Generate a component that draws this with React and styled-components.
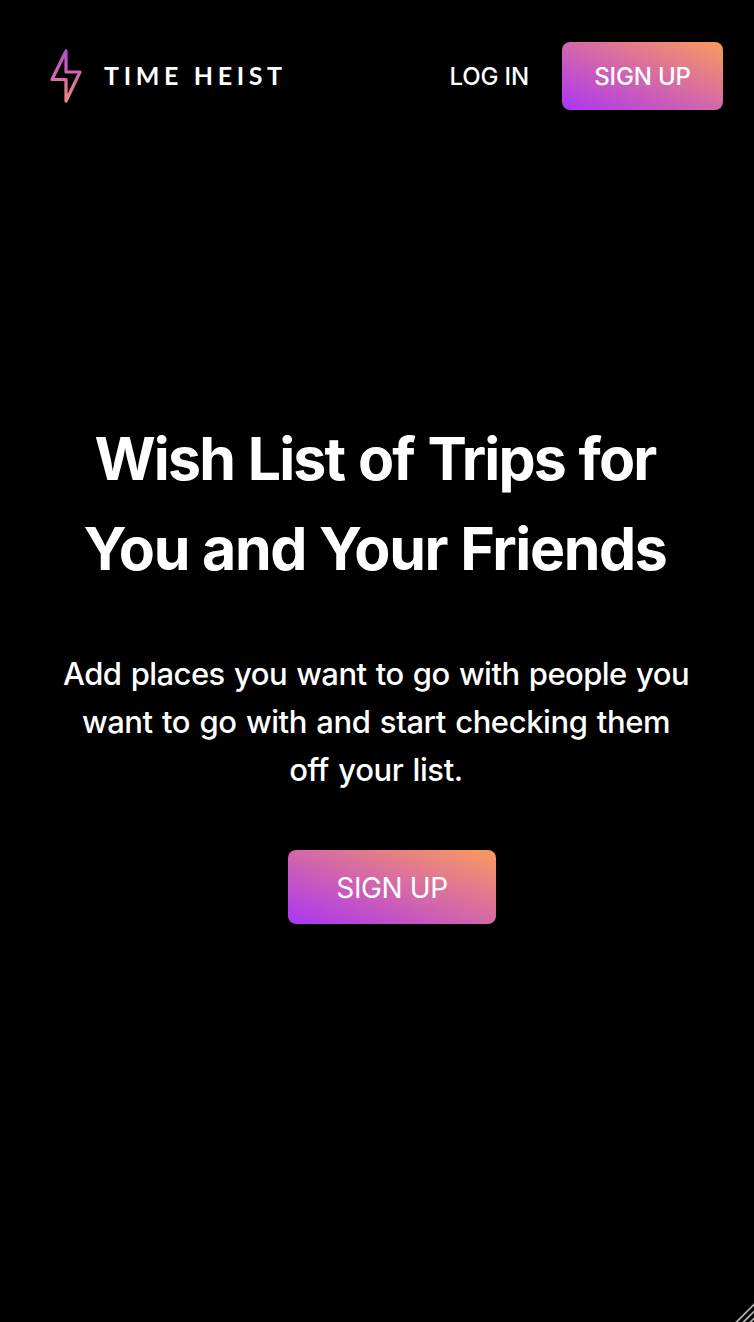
import React from "react";
import styled, { createGlobalStyle } from "styled-components";

const GlobalStyle = createGlobalStyle`
  *, *::before, *::after { box-sizing: border-box; }
  body {
    margin: 0;
    background: #000;
    color: #fff;
    font-family: Inter, "Liberation Sans", sans-serif;
    font-feature-settings: "calt" 0;
  }
`;

const Page = styled.div`
  position: relative;
  display: flex;
  flex-direction: column;
  height: 1322px;
  overflow: hidden;
`;

const Header = styled.header`
  display: flex;
  align-items: center;
  justify-content: space-between;
  padding: 42px 31px 0 50px;
`;

const Brand = styled.a`
  display: flex;
  align-items: center;
  gap: 22px;
`;

const BrandName = styled.span`
  padding-bottom: 2px;
  font-family: Lato, sans-serif;
  font-size: 25px;
  font-weight: 700;
  line-height: 30px;
  letter-spacing: 4.65px;
  white-space: nowrap;
`;

const Nav = styled.nav`
  display: flex;
  align-items: center;
  gap: 33px;
`;

const LoginLink = styled.a`
  padding-top: 2px;
  font-size: 24px;
  font-weight: 450;
  line-height: 36px;
  letter-spacing: -0.15px;
  white-space: nowrap;
`;

const Button = styled.button`
  display: flex;
  align-items: center;
  justify-content: center;
  width: ${({ $large }) => ($large ? 208 : 161)}px;
  height: ${({ $large }) => ($large ? 74 : 68)}px;
  padding: ${({ $large }) => ($large ? 2 : 0)}px 0 0;
  border: 0;
  border-radius: 8px;
  background: linear-gradient(to top right, #ac35f4, #fa9b5d);
  color: #fff;
  font-family: inherit;
  font-size: ${({ $large }) => ($large ? 28 : 24)}px;
  font-weight: ${({ $large }) => ($large ? 400 : 450)};
  letter-spacing: ${({ $large }) => ($large ? -0.4 : -0.15)}px;
  white-space: nowrap;
`;

const Hero = styled.main`
  display: flex;
  flex-direction: column;
  align-items: center;
  padding-top: 304px;
  text-align: center;
`;

const Title = styled.h1`
  margin: 0;
  padding-right: 4px;
  font-size: 59px;
  font-weight: 700;
  line-height: 90px;
  white-space: nowrap;
`;

const Lead = styled.p`
  margin: 56px 0 0;
  padding-right: 2px;
  font-size: 31px;
  font-weight: 450;
  line-height: 48px;
  white-space: nowrap;
`;

const Line = styled.span`
  display: block;
  letter-spacing: ${({ $tracking }) => $tracking}px;
  word-spacing: ${({ $gap = 0 }) => $gap}px;
`;

const Action = styled.div`
  padding: 56px 0 0 30px;
`;

const Grip = styled.svg`
  position: absolute;
  right: 0;
  bottom: 0;
`;

export default function App() {
  return (
    <>
      <GlobalStyle />
      <Page>
        <Header>
          <Brand>
            <svg width="32" height="54" viewBox="0 0 32 54" fill="none" aria-hidden="true">
              <defs>
                <linearGradient id="bolt" x1="0" y1="0" x2="0" y2="54" gradientUnits="userSpaceOnUse">
                  <stop stopColor="#b947e0" />
                  <stop offset="1" stopColor="#f08c7c" />
                </linearGradient>
              </defs>
              <path d="M16 2V23H30L16 52V30.500H2Z" stroke="url(#bolt)" strokeWidth="3.200" strokeLinejoin="round" />
            </svg>
            <BrandName>TIME HEIST</BrandName>
          </Brand>
          <Nav>
            <LoginLink>LOG IN</LoginLink>
            <Button>SIGN UP</Button>
          </Nav>
        </Header>
        <Hero>
          <Title>
            <Line $tracking={-1.85} $gap={1.5}>Wish List of Trips for</Line>
            <Line $tracking={-1.4} $gap={0.5}>You and Your Friends</Line>
          </Title>
          <Lead>
            <Line $tracking={-0.54} $gap={1.5}>Add places you want to go with people you</Line>
            <Line $tracking={-0.42} $gap={1.5}>want to go with and start checking them</Line>
            <Line $tracking={-0.42} $gap={1.5}>off your list.</Line>
          </Lead>
          <Action>
            <Button $large>SIGN UP</Button>
          </Action>
        </Hero>
        <Grip width="20" height="20" viewBox="0 0 20 20" aria-hidden="true">
          <path d="M1 21.500L21.500 1M8 21.500L21.500 8M15 21.500L21.500 15" stroke="#aaa" strokeWidth="1.900" />
        </Grip>
      </Page>
    </>
  );
}
